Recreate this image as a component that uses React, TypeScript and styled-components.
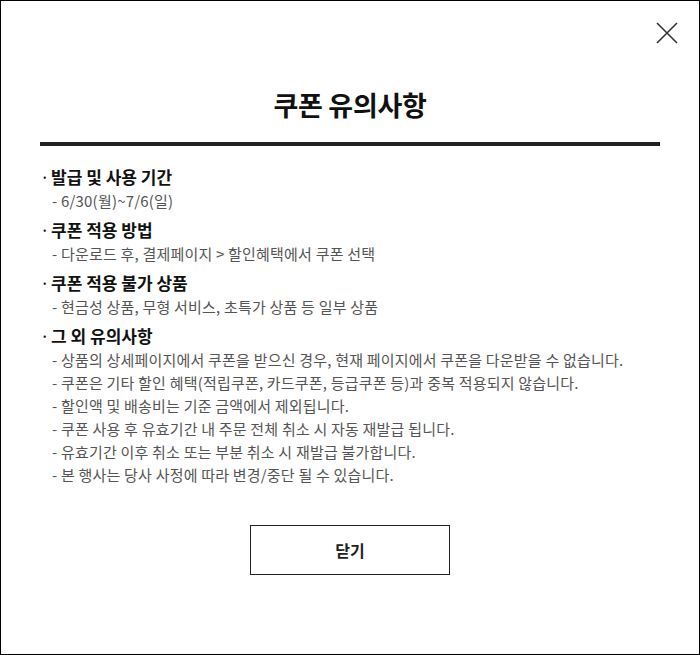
import React from "react";
import styled, { createGlobalStyle } from "styled-components";

const Global = createGlobalStyle`
  html, body { margin: 0; padding: 0; background: #fff; }
  body { font-family: "Noto Sans CJK KR", "Noto Sans", sans-serif; }
  * { box-sizing: border-box; }
`;

const Modal = styled.div`
  position: relative;
  width: 700px;
  height: 655px;
  border: 1px solid #000;
  background: #fff;
  padding: 86px 39px 0;
  display: flex;
  flex-direction: column;
`;

const CloseButton = styled.button`
  position: absolute;
  top: 20px;
  right: 20px;
  width: 24px;
  height: 24px;
  padding: 0;
  border: 0;
  background: none;
  cursor: pointer;
  display: flex;
  align-items: center;
  justify-content: center;
`;

const Title = styled.h2`
  margin: 0;
  font-size: 27px;
  line-height: 36px;
  font-weight: 700;
  color: #111;
  text-align: center;
  letter-spacing: -0.3px;
`;

const Divider = styled.div`
  margin-top: 19px;
  height: 4px;
  background: #222;
`;

const Sections = styled.div`
  margin-top: 19px;
  display: flex;
  flex-direction: column;
  gap: 6px;
`;

const Section = styled.section`
  display: flex;
  flex-direction: column;
`;

const Heading = styled.h3`
  margin: 0;
  font-size: 17px;
  line-height: 24px;
  font-weight: 700;
  color: #111;
  display: flex;
`;

const Bullet = styled.span`
  width: 11px;
  flex: none;
  font-weight: 400;
`;

const Item = styled.p`
  margin: 0;
  padding-left: 12px;
  font-size: 15px;
  line-height: 23px;
  color: #555;
  letter-spacing: 0.2px;
`;

const Footer = styled.div`
  margin-top: 39px;
  display: flex;
  justify-content: center;
`;

const CloseAction = styled.button`
  width: 200px;
  height: 50px;
  border: 1px solid #222;
  background: #fff;
  font-family: inherit;
  font-size: 16px;
  font-weight: 700;
  color: #222;
  cursor: pointer;
`;

const sections: { title: string; items: string[] }[] = [
  { title: "발급 및 사용 기간", items: ["6/30(월)~7/6(일)"] },
  { title: "쿠폰 적용 방법", items: ["다운로드 후, 결제페이지 > 할인혜택에서 쿠폰 선택"] },
  { title: "쿠폰 적용 불가 상품", items: ["현금성 상품, 무형 서비스, 초특가 상품 등 일부 상품"] },
  {
    title: "그 외 유의사항",
    items: [
      "상품의 상세페이지에서 쿠폰을 받으신 경우, 현재 페이지에서 쿠폰을 다운받을 수 없습니다.",
      "쿠폰은 기타 할인 혜택(적립쿠폰, 카드쿠폰, 등급쿠폰 등)과 중복 적용되지 않습니다.",
      "할인액 및 배송비는 기준 금액에서 제외됩니다.",
      "쿠폰 사용 후 유효기간 내 주문 전체 취소 시 자동 재발급 됩니다.",
      "유효기간 이후 취소 또는 부분 취소 시 재발급 불가합니다.",
      "본 행사는 당사 사정에 따라 변경/중단 될 수 있습니다.",
    ],
  },
];

export default function App() {
  return (
    <>
      <Global />
      <Modal>
        <CloseButton aria-label="닫기">
          <svg width="22" height="22" viewBox="0 0 22 22">
            <path d="M1 1L21 21M21 1L1 21" stroke="#333" strokeWidth="1.6" fill="none" />
          </svg>
        </CloseButton>
        <Title>쿠폰 유의사항</Title>
        <Divider />
        <Sections>
          {sections.map((s) => (
            <Section key={s.title}>
              <Heading>
                <Bullet>·</Bullet>
                {s.title}
              </Heading>
              {s.items.map((it) => (
                <Item key={it}>- {it}</Item>
              ))}
            </Section>
          ))}
        </Sections>
        <Footer>
          <CloseAction>닫기</CloseAction>
        </Footer>
      </Modal>
    </>
  );
}
